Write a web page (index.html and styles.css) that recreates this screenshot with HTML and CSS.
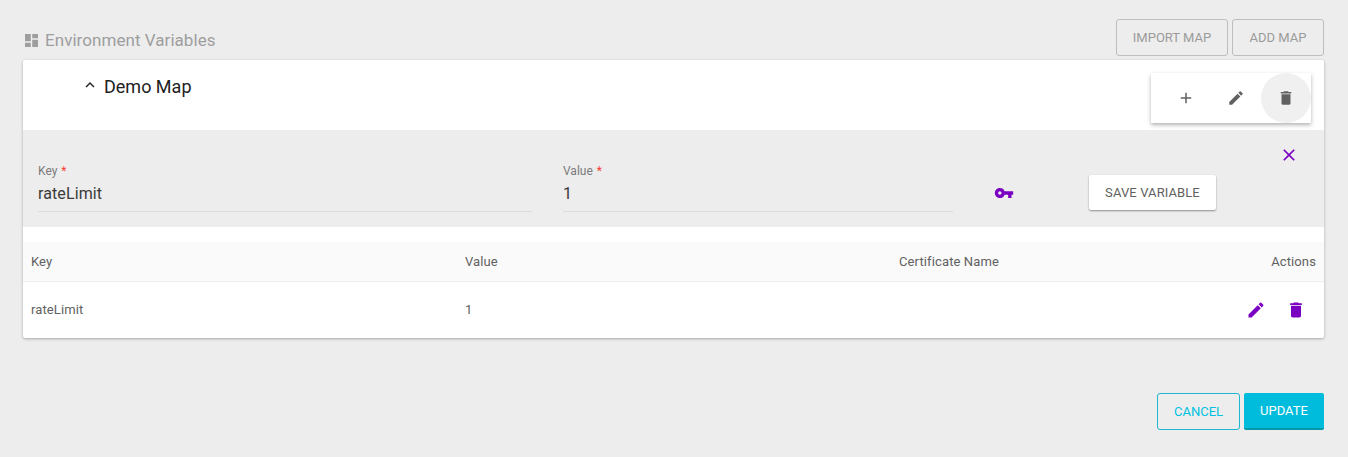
FILE: index.html
```html
<!DOCTYPE html>
<html lang="en">
<head>
  <meta charset="UTF-8">
  <title>Environment Variables</title>
  <link rel="stylesheet" href="styles.css">
</head>
<body>
  <div class="top-bar">
    <div class="page-title">
      <svg class="title-icon" viewBox="3 3 18 18"><path d="M3 13h8V3H3v10zm0 8h8v-6H3v6zm10 0h8V11h-8v10zm0-18v6h8V3h-8z"/></svg>
      <span>Environment Variables</span>
    </div>
    <div class="top-actions">
      <button class="btn-outline import-btn">IMPORT MAP</button>
      <button class="btn-outline add-btn">ADD MAP</button>
    </div>
  </div>

  <div class="card">
    <div class="map-header">
      <svg class="chevron" viewBox="0 0 24 24"><path d="M12 8l-6 6 1.41 1.41L12 10.83l4.59 4.58L18 14z"/></svg>
      <span class="map-name">Demo Map</span>
    </div>

    <div class="map-menu">
      <span class="menu-item">
        <svg viewBox="0 0 24 24"><path d="M19 13h-6v6h-2v-6H5v-2h6V5h2v6h6v2z"/></svg>
      </span>
      <span class="menu-item">
        <svg viewBox="0 0 24 24"><path d="M3 17.25V21h3.75L17.81 9.94l-3.75-3.75L3 17.25zM20.71 7.04a1 1 0 0 0 0-1.41l-2.34-2.34a1 1 0 0 0-1.41 0l-1.83 1.83 3.75 3.75 1.83-1.83z"/></svg>
      </span>
      <span class="menu-item active">
        <svg viewBox="0 0 24 24"><path d="M6 19c0 1.1.9 2 2 2h8c1.1 0 2-.9 2-2V7H6v12zM19 4h-3.5l-1-1h-5l-1 1H5v2h14V4z"/></svg>
      </span>
    </div>

    <div class="var-form">
      <div class="field key-field">
        <label>Key <span class="req">*</span></label>
        <div class="field-value">rateLimit</div>
      </div>
      <div class="field value-field">
        <label>Value <span class="req">*</span></label>
        <div class="field-value">1</div>
      </div>
      <svg class="key-icon" viewBox="0 0 24 24"><path d="M12.65 10A5.99 5.99 0 0 0 7 6c-3.31 0-6 2.69-6 6s2.69 6 6 6a5.99 5.99 0 0 0 5.65-4H17v4h4v-4h2v-4H12.65zM7 14c-1.1 0-2-.9-2-2s.9-2 2-2 2 .9 2 2-.9 2-2 2z"/></svg>
      <button class="save-btn">SAVE VARIABLE</button>
      <svg class="close-icon" viewBox="0 0 24 24"><path d="M19 6.41L17.59 5 12 10.59 6.41 5 5 6.41 10.59 12 5 17.59 6.41 19 12 13.41 17.59 19 19 17.59 13.41 12z"/></svg>
    </div>

    <table class="var-table">
      <thead>
        <tr>
          <th class="key-col">Key</th>
          <th class="value-col">Value</th>
          <th class="cert-col">Certificate Name</th>
          <th class="actions-col">Actions</th>
        </tr>
      </thead>
      <tbody>
        <tr>
          <td class="text-cell">rateLimit</td>
          <td class="text-cell">1</td>
          <td></td>
          <td class="actions-col">
            <div class="row-actions">
              <svg viewBox="0 0 24 24"><path d="M3 17.25V21h3.75L17.81 9.94l-3.75-3.75L3 17.25zM20.71 7.04a1 1 0 0 0 0-1.41l-2.34-2.34a1 1 0 0 0-1.41 0l-1.83 1.83 3.75 3.75 1.83-1.83z"/></svg>
              <svg viewBox="0 0 24 24"><path d="M6 19c0 1.1.9 2 2 2h8c1.1 0 2-.9 2-2V7H6v12zM19 4h-3.5l-1-1h-5l-1 1H5v2h14V4z"/></svg>
            </div>
          </td>
        </tr>
      </tbody>
    </table>
  </div>

  <div class="footer-actions">
    <button class="cancel-btn">CANCEL</button>
    <button class="update-btn">UPDATE</button>
  </div>
</body>
</html>
```

FILE: styles.css
```css
body {
  margin: 0;
  padding: 19px 24px 0 23px;
  height: 457px;
  box-sizing: border-box;
  overflow: hidden;
  background-color: #ededed;
  font-family: Roboto, "Liberation Sans", sans-serif;
}

button {
  font-family: inherit;
  cursor: pointer;
}

.top-bar {
  display: flex;
  justify-content: space-between;
  height: 37px;
  margin-bottom: 4px;
}

.page-title {
  display: flex;
  align-items: center;
  gap: 7px;
  padding: 5px 0 0 2px;
  height: 32px;
  font-size: 17px;
  letter-spacing: 0.05px;
  color: #9e9e9e;
}

.title-icon {
  width: 13px;
  height: 13px;
  fill: #9e9e9e;
}

.top-actions {
  display: flex;
  gap: 4px;
}

.btn-outline {
  height: 37px;
  padding: 0;
  font-size: 13px;
  color: #9b9b9b;
  background: transparent;
  border: 1px solid #bdbdbd;
  border-radius: 3px;
}

.import-btn {
  width: 112px;
}

.add-btn {
  width: 92px;
}

.card {
  position: relative;
  background: #fff;
  border-radius: 2px;
  height: 278px;
  box-shadow: 0 1px 3px rgba(0, 0, 0, 0.3);
}

.map-header {
  display: flex;
  align-items: flex-start;
  height: 70px;
  padding: 15px 0 0 58px;
  box-sizing: border-box;
  color: #212121;
}

.chevron {
  width: 18px;
  height: 18px;
  margin: 1px 5px 0 0;
  fill: #212121;
}

.map-name {
  font-size: 18px;
  line-height: 24px;
}

.map-menu {
  position: absolute;
  top: 13px;
  right: 13px;
  width: 160px;
  height: 50px;
  display: flex;
  justify-content: flex-end;
  background: #fff;
  box-shadow: 0 2px 4px rgba(0, 0, 0, 0.3);
}

.menu-item {
  width: 50px;
  height: 50px;
  display: flex;
  align-items: center;
  justify-content: center;
  border-radius: 50%;
}

.menu-item svg {
  width: 18px;
  height: 18px;
  fill: #616161;
}

.menu-item.active {
  background: #f0f0f0;
}

.var-form {
  position: relative;
  display: flex;
  align-items: flex-start;
  height: 97px;
  padding-left: 15px;
  background: #ededed;
}

.field {
  box-sizing: border-box;
  height: 82px;
  padding-top: 34px;
  border-bottom: 1px solid #dcdcdc;
}

.field label {
  display: block;
  font-size: 12px;
  line-height: 14px;
  color: #7b7b7b;
}

.req {
  margin-left: 1px;
  color: #f44336;
}

.field-value {
  margin-top: 6px;
  font-size: 16px;
  line-height: 20px;
  letter-spacing: 0.1px;
  color: #3a3a3a;
}

.key-field {
  width: 494px;
  margin-right: 31px;
}

.value-field {
  width: 390px;
  margin-right: 41px;
}

.key-icon {
  width: 20px;
  height: 20px;
  margin: 53px 75px 0 0;
  fill: #7a00c2;
}

.save-btn {
  width: 127px;
  height: 35px;
  margin-top: 45px;
  padding: 0;
  font-size: 13px;
  letter-spacing: 0.1px;
  color: #616161;
  background: #fff;
  border: none;
  border-radius: 2px;
  box-shadow: 0 1px 2px rgba(0, 0, 0, 0.4);
}

.close-icon {
  width: 20px;
  height: 20px;
  margin: 15px 0 0 63px;
  fill: #7a00c2;
}

.var-table {
  width: 100%;
  margin-top: 15px;
  table-layout: fixed;
  border-collapse: collapse;
  font-size: 13px;
  letter-spacing: 0.12px;
  color: #616161;
}

.var-table th {
  height: 39px;
  padding: 0 8px;
  text-align: left;
  font-weight: 400;
  background: #fafafa;
  border-bottom: 1px solid #eeeeee;
}

.var-table td {
  box-sizing: border-box;
  height: 56px;
  padding: 0 8px;
}

.var-table .text-cell {
  padding-bottom: 1px;
}

.key-col,
.value-col {
  width: 418px;
}

.cert-col {
  width: 284px;
}

.var-table .actions-col {
  text-align: right;
}

.row-actions {
  display: flex;
  justify-content: flex-end;
  gap: 20px;
  padding-right: 10px;
}

.row-actions svg {
  width: 20px;
  height: 20px;
  fill: #7a00c2;
}

.footer-actions {
  display: flex;
  justify-content: flex-end;
  gap: 4px;
  margin-top: 55px;
}

.cancel-btn {
  width: 83px;
  height: 37px;
  padding: 0;
  font-size: 13px;
  color: #00c2e0;
  background: transparent;
  border: 1px solid #1fb6d0;
  border-radius: 3px;
}

.update-btn {
  width: 80px;
  height: 37px;
  padding: 0;
  font-size: 13px;
  color: #fff;
  background: #00bcdc;
  border: none;
  border-bottom: 2px solid #0097a7;
  border-radius: 2px;
}
```
